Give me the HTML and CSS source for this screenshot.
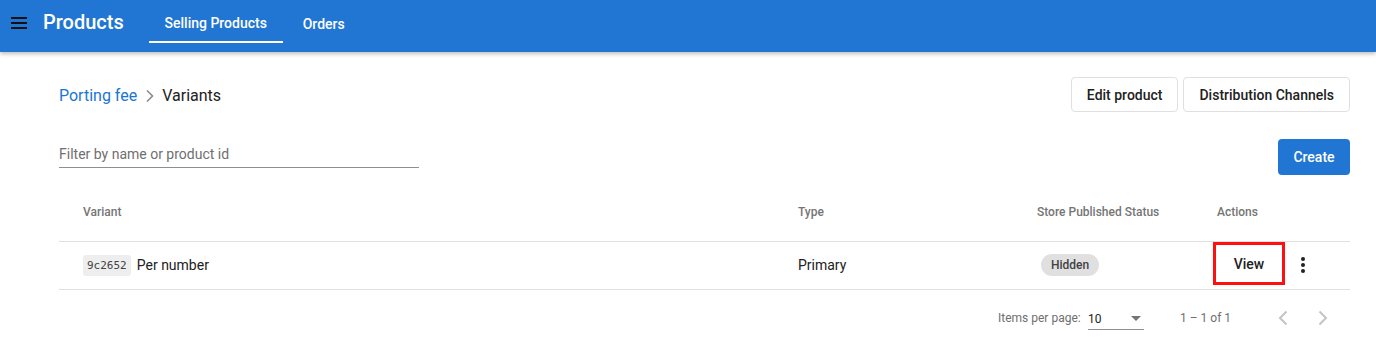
FILE: index.html
```html
<!DOCTYPE html>
<html lang="en">
<head>
    <meta charset="UTF-8">
    <meta name="viewport" content="width=device-width, initial-scale=1.0">
    <title>Products - Variants</title>
    <link rel="stylesheet" href="styles.css">
</head>
<body>
    <header class="toolbar">
        <button class="menu-button" aria-label="Menu">
            <svg width="16" height="12" viewBox="0 0 16 12"><rect y="0" width="16" height="2" fill="#111"/><rect y="5" width="16" height="2" fill="#111"/><rect y="10" width="16" height="2" fill="#111"/></svg>
        </button>
        <span class="toolbar-title">Products</span>
        <nav class="tabs">
            <a class="tab active">Selling Products</a>
            <a class="tab">Orders</a>
        </nav>
    </header>

    <main class="content">
        <div class="page-head">
            <div class="breadcrumb">
                <a class="crumb-link">Porting fee</a>
                <svg class="crumb-sep" width="10" height="14" viewBox="0 0 10 14"><path d="M2 1.5 L7.5 7 L2 12.5" fill="none" stroke="#8a8a8a" stroke-width="1.6"/></svg>
                <span class="crumb-current">Variants</span>
            </div>
            <div class="head-actions">
                <button class="button-outline">Edit product</button>
                <button class="button-outline">Distribution Channels</button>
            </div>
        </div>

        <div class="filter-row">
            <div class="filter-field">
                <span class="placeholder">Filter by name or product id</span>
            </div>
            <button class="button-primary">Create</button>
        </div>

        <div class="table">
            <div class="row header-row">
                <div class="cell">Variant</div>
                <div class="cell">Type</div>
                <div class="cell">Store Published Status</div>
                <div class="cell">Actions</div>
            </div>
            <div class="row body-row">
                <div class="cell"><code class="id-chip">9c2652</code><span>Per number</span></div>
                <div class="cell">Primary</div>
                <div class="cell"><span class="status-chip">Hidden</span></div>
                <div class="cell actions-cell">
                    <button class="view-button">View</button>
                    <button class="more-button" aria-label="More">
                        <svg width="4" height="16" viewBox="0 0 4 16"><circle cx="2" cy="2" r="2" fill="#222"/><circle cx="2" cy="8" r="2" fill="#222"/><circle cx="2" cy="14" r="2" fill="#222"/></svg>
                    </button>
                </div>
            </div>
        </div>

        <div class="paginator">
            <span class="page-label">Items per page:</span>
            <div class="page-select">
                <span>10</span>
                <svg width="10" height="5" viewBox="0 0 10 5"><path d="M0 0 L10 0 L5 5 Z" fill="#757575"/></svg>
            </div>
            <span class="range-label">1 – 1 of 1</span>
            <div class="page-nav">
                <svg width="10" height="16" viewBox="0 0 10 16"><path d="M8.5 1.5 L2 8 L8.5 14.5" fill="none" stroke="#c4c4c4" stroke-width="2"/></svg>
                <svg width="10" height="16" viewBox="0 0 10 16"><path d="M1.5 1.5 L8 8 L1.5 14.5" fill="none" stroke="#c4c4c4" stroke-width="2"/></svg>
            </div>
        </div>
    </main>
</body>
</html>
```

FILE: styles.css
```css
* {
    margin: 0;
    padding: 0;
    box-sizing: border-box;
}

body {
    font-family: Roboto, "Liberation Sans", Arial, sans-serif;
    background-color: #ffffff;
    color: #212121;
    width: 1376px;
    height: 353px;
    overflow: hidden;
}

button {
    font-family: inherit;
    background: none;
    border: none;
    cursor: pointer;
}

.toolbar {
    height: 52px;
    background-color: #2176d3;
    display: flex;
    align-items: center;
    box-shadow: 0 2px 4px rgba(0, 0, 0, 0.25);
    position: relative;
}

.menu-button {
    width: 16px;
    height: 12px;
    margin-left: 11px;
    margin-top: -7px;
    display: flex;
}

.toolbar-title {
    color: #ffffff;
    font-size: 20px;
    font-weight: 500;
    margin-left: 16px;
    margin-top: -9px;
}

.tabs {
    display: flex;
    align-self: stretch;
    margin-left: 25px;
}

.tab {
    color: #ffffff;
    font-size: 14px;
    font-weight: 500;
    display: flex;
    align-items: center;
    justify-content: center;
    padding-top: 5px;
    height: 43px;
}

.tab:nth-child(1) {
    width: 134px;
}

.tab:nth-child(2) {
    width: 82px;
}

.tab.active {
    border-bottom: 2px solid #ffffff;
}

.content {
    padding: 0 26px 0 59px;
}

.page-head {
    display: flex;
    justify-content: space-between;
    align-items: center;
    margin-top: 25px;
    height: 35px;
}

.breadcrumb {
    display: flex;
    align-items: center;
    font-size: 16px;
    padding-top: 2px;
}

.crumb-link {
    color: #1976d2;
}

.crumb-sep {
    margin: 1px 7px 0 8px;
}

.crumb-current {
    color: #212121;
}

.head-actions {
    display: flex;
    gap: 5px;
}

.button-outline {
    height: 35px;
    border: 1px solid #e0e0e0;
    border-radius: 4px;
    padding: 0 15px;
    font-size: 14px;
    font-weight: 500;
    color: #212121;
}

.filter-row {
    display: flex;
    justify-content: space-between;
    align-items: flex-start;
    margin-top: 27px;
}

.filter-field {
    width: 360px;
    height: 29px;
    border-bottom: 1px solid #8f8f8f;
    font-size: 14px;
    color: #6f6f6f;
    padding-top: 7px;
}

.button-primary {
    height: 36px;
    width: 72px;
    background-color: #2176d3;
    color: #ffffff;
    border-radius: 4px;
    font-size: 14px;
    font-weight: 500;
}

.table {
    margin-top: 15px;
}

.row {
    display: grid;
    grid-template-columns: 715px 239px 180px 157px;
    border-bottom: 1px solid #e0e0e0;
}

.header-row {
    height: 52px;
    font-size: 12px;
    font-weight: 500;
    color: #757575;
}

.body-row {
    height: 48px;
    font-size: 14px;
}

.cell {
    display: flex;
    align-items: center;
    padding-left: 24px;
}

.header-row .cell {
    padding-bottom: 8px;
}

.body-row .cell {
    padding-bottom: 1px;
}

.id-chip {
    font-family: "DejaVu Sans Mono", "Liberation Mono", monospace;
    font-size: 11px;
    color: #424242;
    background-color: #eeeeee;
    border-radius: 3px;
    padding: 4px 4px;
    margin-right: 6px;
}

.status-chip {
    display: inline-block;
    background-color: #e0e0e0;
    color: #424242;
    font-size: 12px;
    font-weight: 500;
    border-radius: 12px;
    padding: 4px 10px;
    margin-left: 4px;
}

.actions-cell {
    padding-left: 20px;
}

.view-button {
    width: 72px;
    height: 43px;
    border: 3px solid #ff1010;
    font-size: 14px;
    font-weight: 500;
    color: #212121;
    margin-top: -3px;
}

.more-button {
    width: 32px;
    height: 32px;
    margin-left: 2px;
    display: flex;
    align-items: center;
    justify-content: center;
}

.paginator {
    height: 56px;
    display: flex;
    align-items: center;
    font-size: 12px;
    color: #6f6f6f;
    padding-left: 939px;
}

.page-label {
    width: 90px;
}

.page-select {
    width: 56px;
    height: 22px;
    border-bottom: 1px solid #8f8f8f;
    display: flex;
    align-items: center;
    justify-content: space-between;
    color: #212121;
    padding: 0 3px 0 0;
    margin-top: 2px;
}

.range-label {
    margin-left: 36px;
    width: 98px;
}

.page-nav {
    display: flex;
    gap: 30px;
}
```
